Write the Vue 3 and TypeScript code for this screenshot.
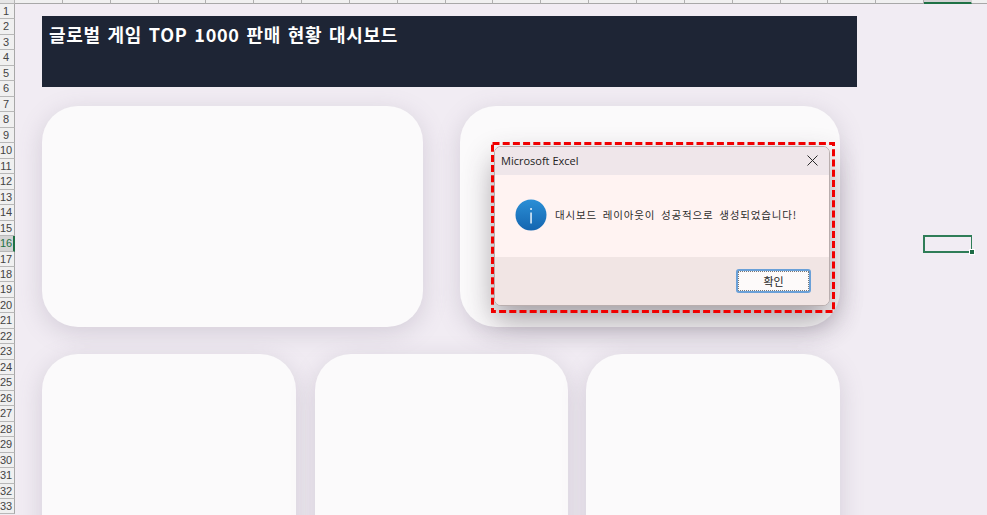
<script setup lang="ts">
const rows: number[] = Array.from({ length: 33 }, (_, i) => i + 1)
const cols: number[] = Array.from({ length: 21 }, (_, i) => i)
const selectedCol = 19
const selectedRow = 16
</script>

<template>
  <div class="app">
    <div class="corner"></div>
    <div class="col-head">
      <div v-for="c in cols" :key="c" class="col" :class="{ sel: c === selectedCol }"></div>
    </div>
    <div class="row-head">
      <div v-for="r in rows" :key="r" class="row" :class="{ sel: r === selectedRow }">{{ r }}</div>
    </div>
    <main class="sheet">
      <header class="title"><h1>글로벌 게임 TOP 1000 판매 현황 대시보드</h1></header>
      <section class="top">
        <div class="card"></div>
        <div class="card"></div>
      </section>
      <section class="bottom">
        <div class="card"></div>
        <div class="card"></div>
        <div class="card"></div>
      </section>
      <div class="cell"><span class="handle"></span></div>
    </main>
    <div class="mark">
      <svg class="dash" width="344" height="171" viewBox="0 0 344 171">
        <rect x="1.5" y="1.5" width="341" height="168" fill="none" stroke="#f00000" stroke-width="3" stroke-dasharray="7 3.2" />
      </svg>
      <div class="dialog">
        <div class="d-title">
          <span>Microsoft Excel</span>
          <svg class="close" width="11" height="11" viewBox="0 0 11 11">
            <path d="M.5.5l10 10M10.5.5l-10 10" stroke="#2a2a2a" stroke-width="1" fill="none" />
          </svg>
        </div>
        <div class="d-body">
          <svg class="info" width="32" height="32" viewBox="0 0 32 32">
            <defs>
              <linearGradient id="infoFill" x1="0" y1="0" x2="0" y2="1">
                <stop offset="0" stop-color="#2b8fd6" />
                <stop offset="1" stop-color="#1465b0" />
              </linearGradient>
            </defs>
            <circle cx="16" cy="16" r="15.5" fill="url(#infoFill)" />
            <rect x="15.3" y="13.5" width="1.5" height="11" fill="#e8f3fb" />
            <rect x="15.3" y="9" width="1.5" height="2" fill="#e8f3fb" />
          </svg>
          <p>대시보드 레이아웃이 성공적으로 생성되었습니다!</p>
        </div>
        <div class="d-foot">
          <button class="ok" type="button">확인</button>
        </div>
      </div>
    </div>
  </div>
</template>

<style>
html, body { margin: 0; padding: 0; }
</style>

<style scoped>
.app {
  width: 987px;
  height: 515px;
  position: relative;
  overflow: hidden;
  display: grid;
  grid-template-columns: 15px 1fr;
  grid-template-rows: 4px 1fr;
  background: #f1ecf3;
  font-family: "Noto Sans CJK KR", "Noto Sans", sans-serif;
}
.corner { background: #e6e6e6; border-right: 1px solid #b5b5b5; border-bottom: 1px solid #b5b5b5; box-sizing: border-box; }
.col-head { display: flex; overflow: hidden; }
.col {
  flex: 0 0 47.85px;
  box-sizing: border-box;
  background: #f0f0f0;
  border-right: 1px solid #b0b0b0;
  border-bottom: 1px solid #a8a8a8;
}
.col.sel { background: #d3d3d3; border-bottom: 2px solid #1f7145; border-right-color: #d3d3d3; }
.row-head { display: flex; flex-direction: column; overflow: hidden; }
.row {
  flex: 0 0 15.47px;
  box-sizing: border-box;
  background: #f0f0f0;
  border-right: 1px solid #a8a8a8;
  border-bottom: 1px solid #b8b8b8;
  font: 11px/14px "Liberation Sans", Arial, sans-serif;
  color: #444;
  text-align: center;
  padding-right: 2px;
}
.row.sel { background: #d3d3d3; border-right: 2px solid #1f7145; color: #1f7145; }
.sheet {
  position: relative;
  display: flex;
  flex-direction: column;
  padding: 12px 0 0 27px;
  min-width: 0;
  min-height: 0;
  overflow: hidden;
}
.title {
  width: 815px;
  height: 71px;
  flex: none;
  background: #1e2535;
  box-sizing: border-box;
  padding: 4px 7px;
}
.title h1 {
  margin: 0;
  color: #fff;
  font-size: 18px;
  line-height: 28px;
  font-weight: 700;
  letter-spacing: 0.7px;
  word-spacing: 2px;
  white-space: nowrap;
}
.top { display: flex; gap: 37px; margin-top: 19px; flex: none; }
.top .card { width: 381px; height: 221px; }
.top .card + .card { width: 380px; }
.bottom { display: flex; gap: 18.5px; margin-top: 27px; flex: none; }
.bottom .card { width: 253px; height: 222px; }
.bottom .card:first-child { width: 254px; }
.bottom .card:last-child { width: 254px; }
.card {
  background: #fbfafb;
  border-radius: 36px;
  box-shadow: 0 6px 24px rgba(110, 95, 125, 0.22);
}
.cell {
  position: absolute;
  left: 908px;
  top: 231px;
  width: 49px;
  height: 18px;
  box-sizing: border-box;
  border: 2px solid #2f7d57;
  border-right-width: 1px;
}
.handle {
  position: absolute;
  right: -3px;
  bottom: -3px;
  width: 4px;
  height: 4px;
  background: #1d6b45;
  outline: 1px solid #fff;
}
.mark {
  position: absolute;
  left: 491px;
  top: 142px;
  width: 344px;
  height: 171px;
  box-sizing: border-box;
  padding: 4px 5px 7px 3px;
  display: flex;
}
.dash { position: absolute; left: 0; top: 0; z-index: 1; }
.dialog {
  flex: 1;
  display: flex;
  flex-direction: column;
  overflow: hidden;
  border-radius: 7px;
  border: 1px solid #b9aeae;
  box-shadow: 0 14px 30px rgba(60, 50, 60, 0.46);
  background: #fff3f2;
  font-size: 11px;
  color: #222;
}
.d-title {
  height: 28px;
  flex: none;
  background: #efe6ea;
  display: flex;
  align-items: center;
  justify-content: space-between;
  padding: 0 11px 1px 6px;
  box-sizing: border-box;
  font-family: "Open Sans", "Noto Sans", sans-serif;
  font-size: 11px;
}
.d-body {
  flex: 1;
  display: flex;
  align-items: center;
  gap: 8px;
  padding: 0 0 3px 20px;
  background: #fff3f2;
}
.d-body p { margin: 0; white-space: nowrap; font-size: 10.5px; letter-spacing: 0.85px; word-spacing: 2.5px; color: #2c2c2c; }
.info { flex: none; }
.d-foot {
  height: 48px;
  flex: none;
  background: #f1e5e4;
  display: flex;
  align-items: center;
  justify-content: flex-end;
  padding: 0 18px 0 0;
}
.ok {
  width: 75px;
  height: 24px;
  box-sizing: border-box;
  padding: 0;
  background: #fdfafa;
  border: 2px solid #6aa0d8;
  border-radius: 3px;
  outline: 1px dotted #777;
  outline-offset: -3px;
  font: 11px "Noto Sans CJK KR", sans-serif;
  color: #222;
}
</style>
